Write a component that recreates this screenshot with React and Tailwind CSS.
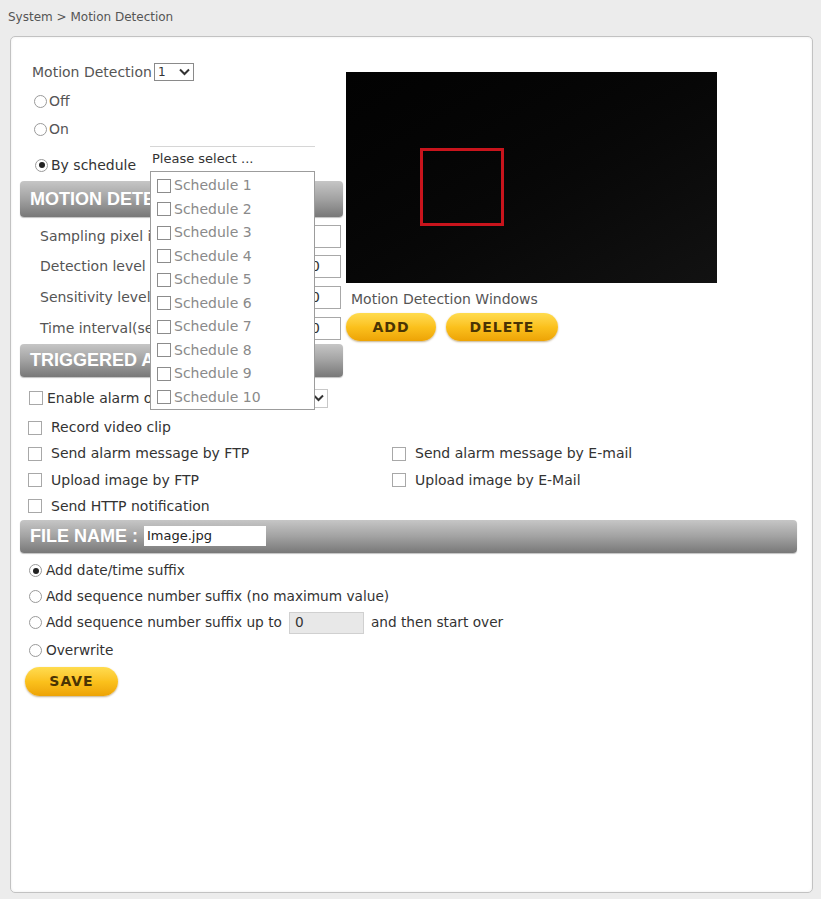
import { useState } from 'react';

const font = { fontFamily: '"DejaVu Sans", Verdana, sans-serif' };

function Radio({ checked }) {
  return (
    <span className="inline-flex h-[13px] w-[13px] shrink-0 items-center justify-center rounded-full border border-[#9a9a9a] bg-white">
      {checked && <span className="h-[6px] w-[6px] rounded-full bg-[#222]" />}
    </span>
  );
}

function Check({ light }) {
  return (
    <span
      className={`inline-block h-[14px] w-[14px] shrink-0 border bg-white ${
        light ? 'border-[#8c8c8c]' : 'border-[#a8a8a8]'
      }`}
    />
  );
}

function Bar({ children, className = '' }) {
  return (
    <div
      className={`flex items-center rounded-[4px] bg-linear-to-b from-[#c6c6c6] via-[#a2a2a2] to-[#787878] pl-[10px] text-[18px] font-bold text-white shadow-[0_1px_1px_rgba(0,0,0,0.25)] ${className}`}
      style={{ fontFamily: '"Liberation Sans", Arial, sans-serif' }}
    >
      {children}
    </div>
  );
}

function YellowButton({ label, className = '' }) {
  return (
    <button
      className={`flex items-center justify-center rounded-full bg-linear-to-b from-[#ffdc4e] via-[#fbc11c] to-[#eda304] text-[14px] font-bold tracking-[1px] text-[#4a3404] shadow-[0_1px_2px_rgba(120,80,0,0.45)] ${className}`}
    >
      {label}
    </button>
  );
}

function Arrow() {
  return (
    <svg width="11" height="8" viewBox="0 0 11 8">
      <polyline points="1,1.5 5.5,6 10,1.5" fill="none" stroke="#333" strokeWidth="2" />
    </svg>
  );
}

export default function App() {
  const [schedules] = useState([1, 2, 3, 4, 5, 6, 7, 8, 9, 10]);

  const params = ['Sampling pixel interval', 'Detection level', 'Sensitivity level', 'Time interval(sec)'];

  return (
    <div className="h-[899px] w-[821px] overflow-hidden bg-[#ececec]" style={font}>
      {/* breadcrumb */}
      <div className="flex h-[36px] items-start pl-[8px] pt-[8px] text-[12px] text-[#555]">
        System &gt; Motion Detection
      </div>

      <div className="ml-[10px] h-[857px] w-[803px] rounded-[5px] border border-[#c2c2c2] bg-white pl-[9px] pr-[15px] shadow-[inset_0_0_3px_rgba(0,0,0,0.08)]">
        <div className="flex">
          {/* left column */}
          <div className="flex w-[323px] flex-col text-[14px] text-[#555]">
            <div className="mt-[25px] flex h-[20px] items-center pl-[12px]">
              <span>Motion Detection</span>
              <span className="ml-[2px] flex h-[18px] w-[40px] items-center justify-between border border-[#8a8a8a] px-[3px] text-[12px] text-[#333]">
                1 <Arrow />
              </span>
            </div>
            <div className="mt-[5px] flex h-[28px] items-center gap-[2px] pl-[14px]">
              <Radio /> <span>Off</span>
            </div>
            <div className="flex h-[28px] items-center gap-[2px] pl-[14px]">
              <Radio /> <span>On</span>
            </div>
            <div className="relative mt-[8px] flex h-[28px] items-center gap-[3px] pl-[15px] text-[#333]">
              <Radio checked /> <span>By schedule</span>

              {/* schedule dropdown */}
              <div className="absolute left-[130px] top-[-5px] z-10 w-[165px]">
                <div className="flex h-[25px] items-center border-t border-[#d6d6d6] bg-white pl-[2px] text-[13px] text-[#333]">
                  Please select ...
                </div>
                <div className="border border-[#9c9c9c] bg-white pt-[2px] pl-[6px]">
                  {schedules.map((n) => (
                    <div key={n} className="flex h-[23.5px] items-center gap-[3px] text-[14px] text-[#8a8a8a]">
                      <Check light />
                      <span>Schedule {n}</span>
                    </div>
                  ))}
                </div>
              </div>
            </div>

            <Bar className="mt-[2px] h-[36px]">MOTION DETECTION</Bar>

            <div className="mt-[4px] flex flex-col">
              {params.map((p, i) => (
                <div key={p} className="flex h-[30.6px] items-center justify-between pl-[20px] pr-[2px]">
                  <span>{p}</span>
                  <span className="flex h-[23px] w-[35px] items-center border border-[#a8a8a8] pl-[4px] text-[#333]">
                    {i > 0 ? '0' : ''}
                  </span>
                </div>
              ))}
            </div>

            <Bar className="mt-[1px] h-[33px]">TRIGGERED ACTION</Bar>

            <div className="mt-[11px] flex h-[20px] items-center pl-[9px] text-[#333]">
              <Check />
              <span className="ml-[4px]">Enable alarm output</span>
              <span className="ml-auto mr-[15px] flex h-[19px] w-[90px] items-center justify-end border border-[#c8c8c8] pr-[3px]">
                <Arrow />
              </span>
            </div>
          </div>

          {/* right column */}
          <div className="ml-[3px] flex flex-col">
            <div className="relative mt-[35px] h-[211px] w-[371px] bg-[#050505] bg-linear-to-br from-[#020202] via-[#070707] to-[#121212]">
              <div className="absolute left-[74px] top-[76px] h-[78px] w-[84px] border-[3px] border-[#c8141c]" />
            </div>
            <div className="mt-[7px] flex h-[18px] items-center pl-[5px] text-[14px] text-[#555]">
              Motion Detection Windows
            </div>
            <div className="mt-[5px] flex gap-[10px]">
              <YellowButton label="ADD" className="h-[28px] w-[90px]" />
              <YellowButton label="DELETE" className="h-[28px] w-[112px]" />
            </div>
          </div>
        </div>

        {/* triggered actions */}
        <div className="mt-[6px] grid grid-cols-[372px_1fr] text-[14px] text-[#333]">
          <div className="flex h-[26.3px] items-center gap-[9px] pl-[8px]">
            <Check /> <span>Record video clip</span>
          </div>
          <div />
          <div className="flex h-[26.3px] items-center gap-[9px] pl-[8px]">
            <Check /> <span>Send alarm message by FTP</span>
          </div>
          <div className="flex h-[26.3px] items-center gap-[9px]">
            <Check /> <span>Send alarm message by E-mail</span>
          </div>
          <div className="flex h-[26.3px] items-center gap-[9px] pl-[8px]">
            <Check /> <span>Upload image by FTP</span>
          </div>
          <div className="flex h-[26.3px] items-center gap-[9px]">
            <Check /> <span>Upload image by E-Mail</span>
          </div>
          <div className="flex h-[26.3px] items-center gap-[9px] pl-[8px]">
            <Check /> <span>Send HTTP notification</span>
          </div>
        </div>

        <Bar className="h-[33px] w-[777px]">
          FILE NAME :
          <span
            className="ml-[6px] flex h-[20px] w-[122px] items-center bg-white pl-[3px] text-[13px] font-normal text-[#222]"
            style={font}
          >
            Image.jpg
          </span>
        </Bar>

        <div className="mt-[5px] flex flex-col text-[13.7px] text-[#333]">
          <div className="flex h-[26px] items-center gap-[4px] pl-[9px]">
            <Radio checked /> <span>Add date/time suffix</span>
          </div>
          <div className="flex h-[26px] items-center gap-[4px] pl-[9px]">
            <Radio /> <span>Add sequence number suffix (no maximum value)</span>
          </div>
          <div className="flex h-[26px] items-center gap-[4px] pl-[9px]">
            <Radio /> <span>Add sequence number suffix up to</span>
            <span className="ml-[3px] flex h-[22px] w-[75px] items-center border border-[#d0d0d0] bg-[#e8e8e8] pl-[5px]">
              0
            </span>
            <span className="ml-[3px]">and then start over</span>
          </div>
          <div className="mt-[2px] flex h-[26px] items-center gap-[4px] pl-[9px]">
            <Radio /> <span>Overwrite</span>
          </div>
        </div>

        <YellowButton label="SAVE" className="ml-[5px] mt-[3px] h-[29px] w-[93px]" />
      </div>
    </div>
  );
}
